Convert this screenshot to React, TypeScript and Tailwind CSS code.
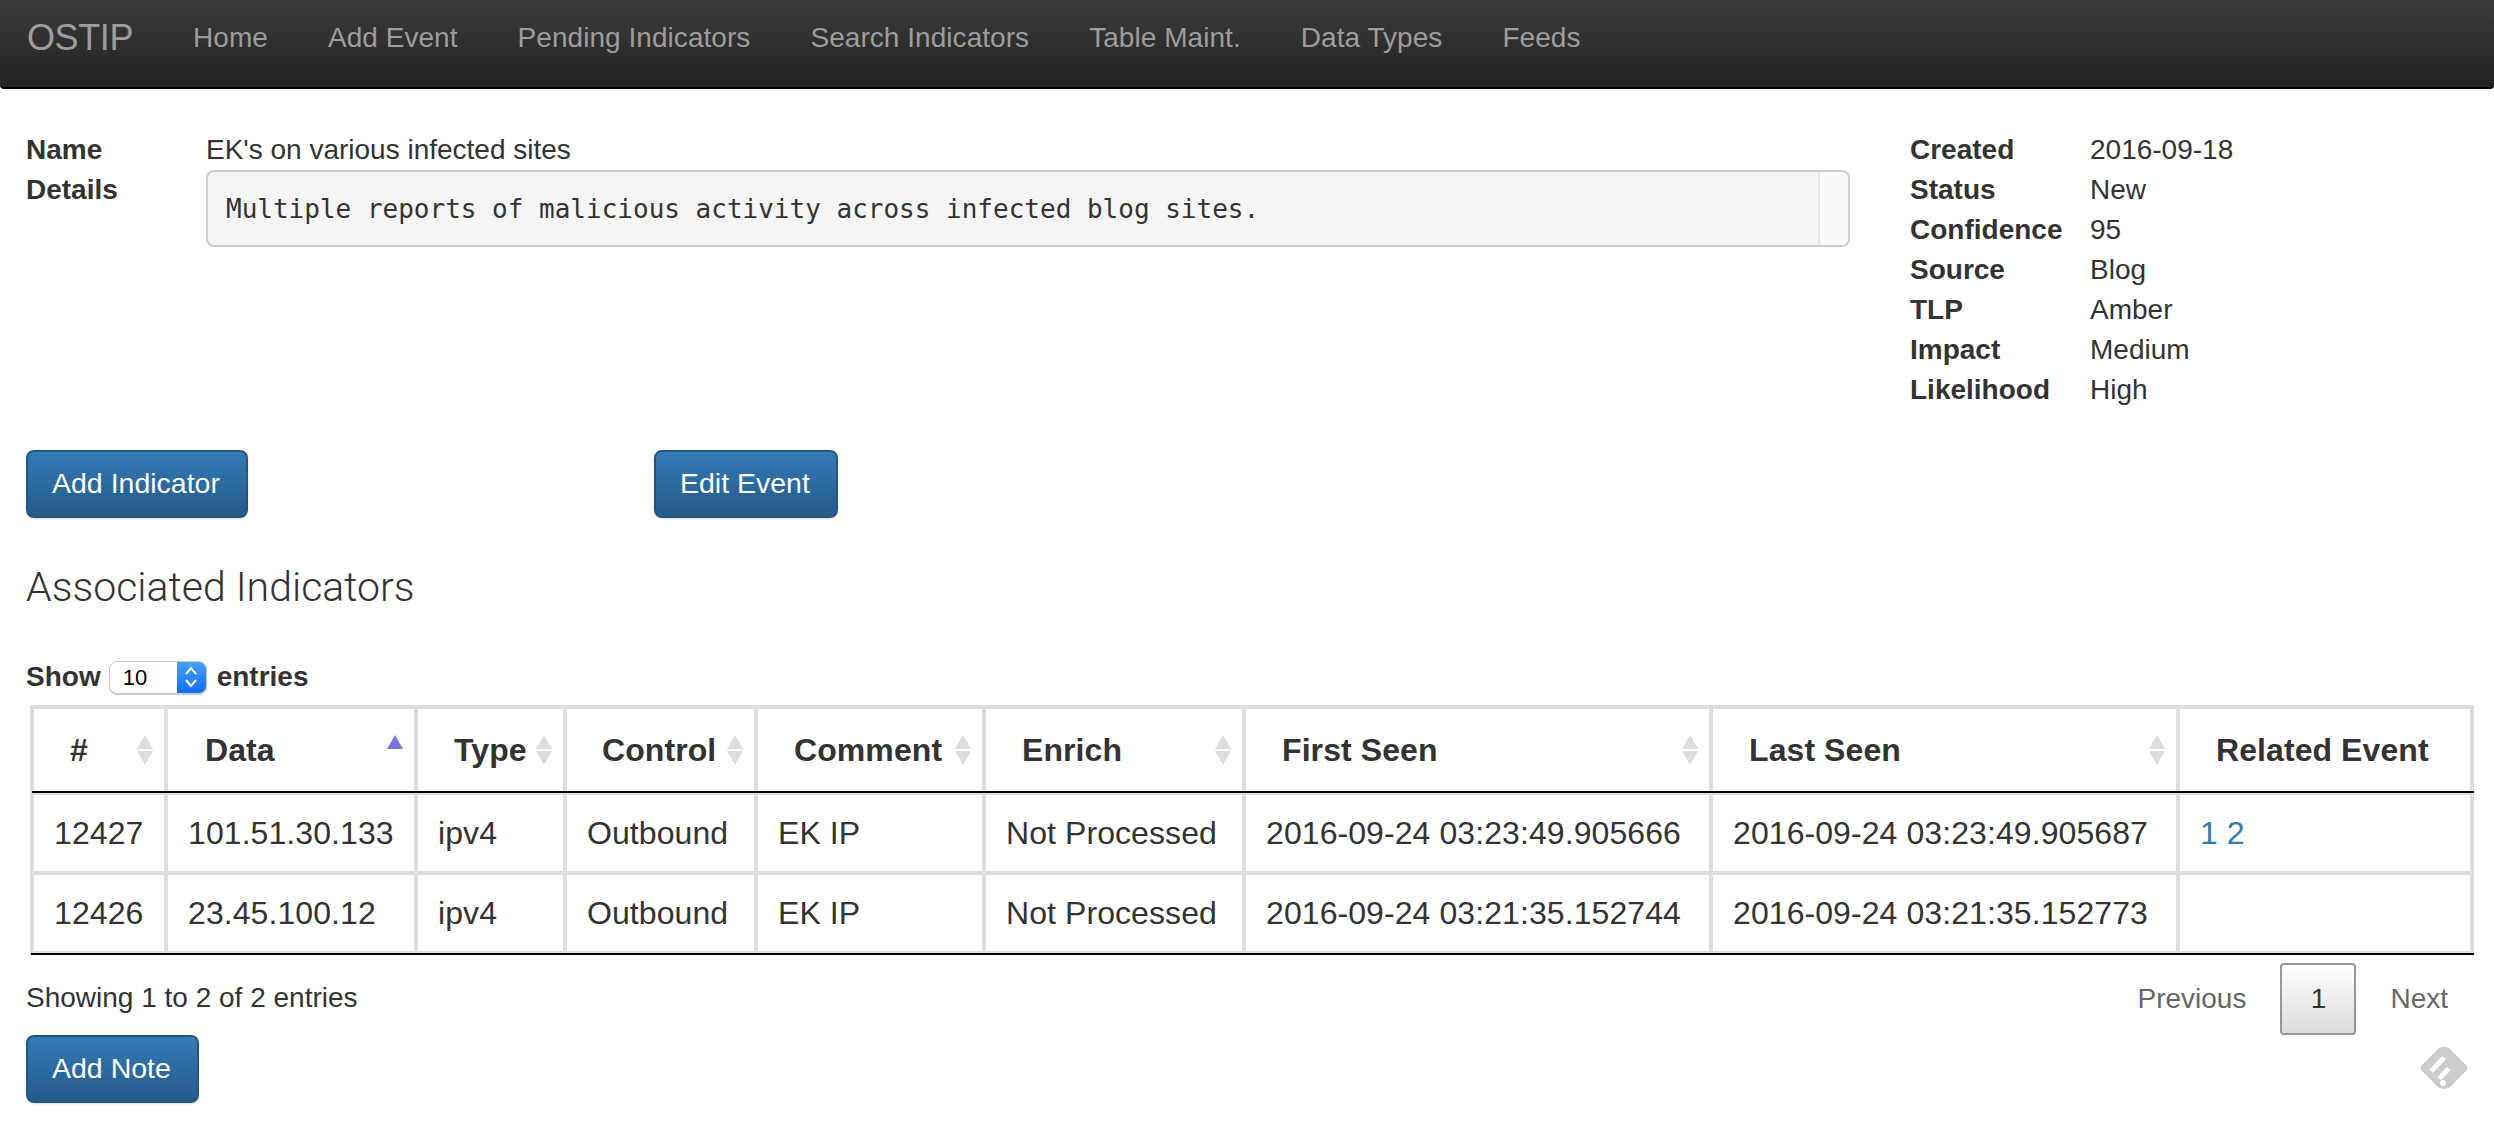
import React from 'react';

const navLinks = ['Home', 'Add Event', 'Pending Indicators', 'Search Indicators', 'Table Maint.', 'Data Types', 'Feeds'];

const eventMeta = [
  ['Created', '2016-09-18'],
  ['Status', 'New'],
  ['Confidence', '95'],
  ['Source', 'Blog'],
  ['TLP', 'Amber'],
  ['Impact', 'Medium'],
  ['Likelihood', 'High'],
];

const columns = [
  { label: '#', width: 134, pad: 'pl-[36px]', sort: 'both' },
  { label: 'Data', width: 250, pad: 'pl-[37px]', sort: 'asc' },
  { label: 'Type', width: 149, pad: 'pl-[36px]', sort: 'both' },
  { label: 'Control', width: 191, pad: 'pl-[35px]', sort: 'both' },
  { label: 'Comment', width: 228, pad: 'pl-[36px]', sort: 'both' },
  { label: 'Enrich', width: 260, pad: 'pl-[36px]', sort: 'both' },
  { label: 'First Seen', width: 467, pad: 'pl-[36px]', sort: 'both' },
  { label: 'Last Seen', width: 467, pad: 'pl-[36px]', sort: 'both' },
  { label: 'Related Event', width: 294, pad: 'pl-[36px]', sort: 'none' },
];

const rows = [
  ['12427', '101.51.30.133', 'ipv4', 'Outbound', 'EK IP', 'Not Processed', '2016-09-24 03:23:49.905666', '2016-09-24 03:23:49.905687'],
  ['12426', '23.45.100.12', 'ipv4', 'Outbound', 'EK IP', 'Not Processed', '2016-09-24 03:21:35.152744', '2016-09-24 03:21:35.152773'],
];

const btn =
  'h-[68px] pl-[24px] pr-[26px] pb-[2px] rounded-[8px] border-2 border-[#245580] bg-gradient-to-b from-[#337ab7] to-[#265a88] text-white text-[28.5px] shadow-[0_1px_2px_rgba(0,0,0,0.15)]';

function SortIcon({ sort }: { sort: string }) {
  if (sort === 'none') return null;
  return (
    <svg className="absolute right-[11px] top-[26px]" width="16" height="30" viewBox="0 0 16 30">
      {sort === 'asc' ? (
        <path d="M8 0 L16 14 L0 14 Z" fill="#7878dc" />
      ) : (
        <>
          <path d="M8 0 L16 14 L0 14 Z" fill="#dddddd" />
          <path d="M0 16 L16 16 L8 30 Z" fill="#dddddd" />
        </>
      )}
    </svg>
  );
}

export default function App(): React.JSX.Element {
  return (
    <div className="relative min-h-[1128px] bg-white text-[#333] text-[28px] leading-[40px] font-['Liberation_Sans',Arial,sans-serif] overflow-hidden">
      <nav className="flex h-[89px] items-start rounded-b-[4px] border-b-2 border-black bg-gradient-to-b from-[#3c3c3c] to-[#222] pl-[27px]">
        <a className="mr-[60px] text-[36px] leading-[76px] tracking-[-0.4px] text-[#9d9d9d]">OSTIP</a>
        <div className="flex gap-[60px] leading-[76px] tracking-[0.05px] text-[#9d9d9d]">
          {navLinks.map((l) => (
            <a key={l}>{l}</a>
          ))}
        </div>
      </nav>

      <div className="px-[26px] pt-[41px]">
        <div className="flex">
          <div className="w-[181px] shrink-0 font-bold">
            <div>Name</div>
            <div>Details</div>
          </div>
          <div className="w-[1644px] -ml-px shrink-0">
            <div>EK's on various infected sites</div>
            <div className="flex h-[77px] overflow-hidden rounded-[8px] border-2 border-[#ccc] bg-[#f5f5f5] font-['DejaVu_Sans_Mono',monospace] text-[26px] text-[#333]">
              <div className="flex-1 pl-[18px] pt-[17px]">Multiple reports of malicious activity across infected blog sites.</div>
              <div className="w-[30px] border-l-2 border-[#e7e7e7] bg-[#fafafa]" />
            </div>
          </div>
          <div className="ml-[60px]">
            {eventMeta.map(([k, v]) => (
              <div key={k} className="flex">
                <div className="w-[180px] font-bold">{k}</div>
                <div>{v}</div>
              </div>
            ))}
          </div>
        </div>

        <div className="mt-[40px] flex">
          <button className={`${btn} mr-[406px]`}>Add Indicator</button>
          <button className={btn}>Edit Event</button>
        </div>

        <h3 className="mt-[45px] text-[41px] font-light leading-[48px] font-['Roboto',sans-serif]">Associated Indicators</h3>

        <div className="mt-[49px] flex h-[34px] items-center font-bold">
          Show
          <div className="ml-[8px] mr-[10px] flex h-[33px] w-[98px] overflow-hidden rounded-[8px] border border-[#c8c8c8] bg-white font-normal shadow-[0_1px_1px_rgba(0,0,0,0.2)]">
            <span className="flex-1 pl-[13px] text-[22px] leading-[31px] text-black">10</span>
            <span className="flex w-[29px] items-center justify-center bg-gradient-to-b from-[#4aa0fb] to-[#0a6cff]">
              <svg width="14" height="24" viewBox="0 0 14 24" fill="none" stroke="white" strokeWidth="2">
                <path d="M2 9 L7 3 L12 9" />
                <path d="M2 15 L7 21 L12 15" />
              </svg>
            </span>
          </div>
          entries
        </div>

        <table className="mt-[11px] ml-[4px] w-[2444px] table-fixed border-separate border-spacing-0 border-t-4 border-l-4 border-[#ddd] text-[32px] leading-[44px] tracking-[0.08px]">
          <colgroup>
            {columns.map((c) => (
              <col key={c.label} style={{ width: c.width }} />
            ))}
          </colgroup>
          <thead>
            <tr>
              {columns.map((c) => (
                <th key={c.label} className={`relative h-[86px] border-r-4 border-b-2 border-[#ddd] pb-[3px] text-left font-bold whitespace-nowrap ${c.pad}`}>
                  {c.label}
                  <SortIcon sort={c.sort} />
                  <div className="absolute right-[-4px] bottom-0 left-[-2px] h-[2px] bg-black" />
                </th>
              ))}
            </tr>
          </thead>
          <tbody>
            {rows.map((r, i) => (
              <tr key={r[0]}>
                {r.map((cell, j) => (
                  <td key={j} className="h-[80px] border-r-4 border-b-4 border-[#ddd] pl-[20px] whitespace-nowrap">
                    {cell}
                  </td>
                ))}
                <td className="h-[80px] border-r-4 border-b-4 border-[#ddd] pl-[20px]">
                  {i === 0 && <span className="text-[#337ab7]">1 2</span>}
                </td>
              </tr>
            ))}
          </tbody>
        </table>
        <div className="relative ml-[5px] -mt-[2px] h-[2px] w-[2443px] bg-black" />

        <div className="mt-[8px] flex justify-between">
          <div className="pt-[15px]">Showing 1 to 2 of 2 entries</div>
          <div className="flex items-center pr-[20px]">
            <span className="text-[#666]">Previous</span>
            <span className="mx-[34px] flex h-[72px] w-[76px] items-center justify-center rounded-[4px] border-2 border-[#979797] bg-gradient-to-b from-white to-[#dcdcdc]">1</span>
            <span className="text-[#666]">Next</span>
          </div>
        </div>

        <button className={`${btn} block`}>Add Note</button>
      </div>

      <svg className="absolute left-[2420px] top-[1046px]" width="48" height="44" viewBox="0 0 48 44">
        <path d="M19 2 Q24 -1 29 2 L46 19 Q49 22 46 25 L31 40 Q28 43 24 43 Q20 43 17 40 L2 25 Q-1 22 2 19 Z" fill="#cccccc" />
        <path d="M9 24 L22 10 L26 13 L13 27 Z" fill="white" />
        <path d="M17 31 L27 21 L31 24 L21 34 Z" fill="white" />
        <circle cx="23" cy="37" r="3" fill="white" />
      </svg>
    </div>
  );
}
